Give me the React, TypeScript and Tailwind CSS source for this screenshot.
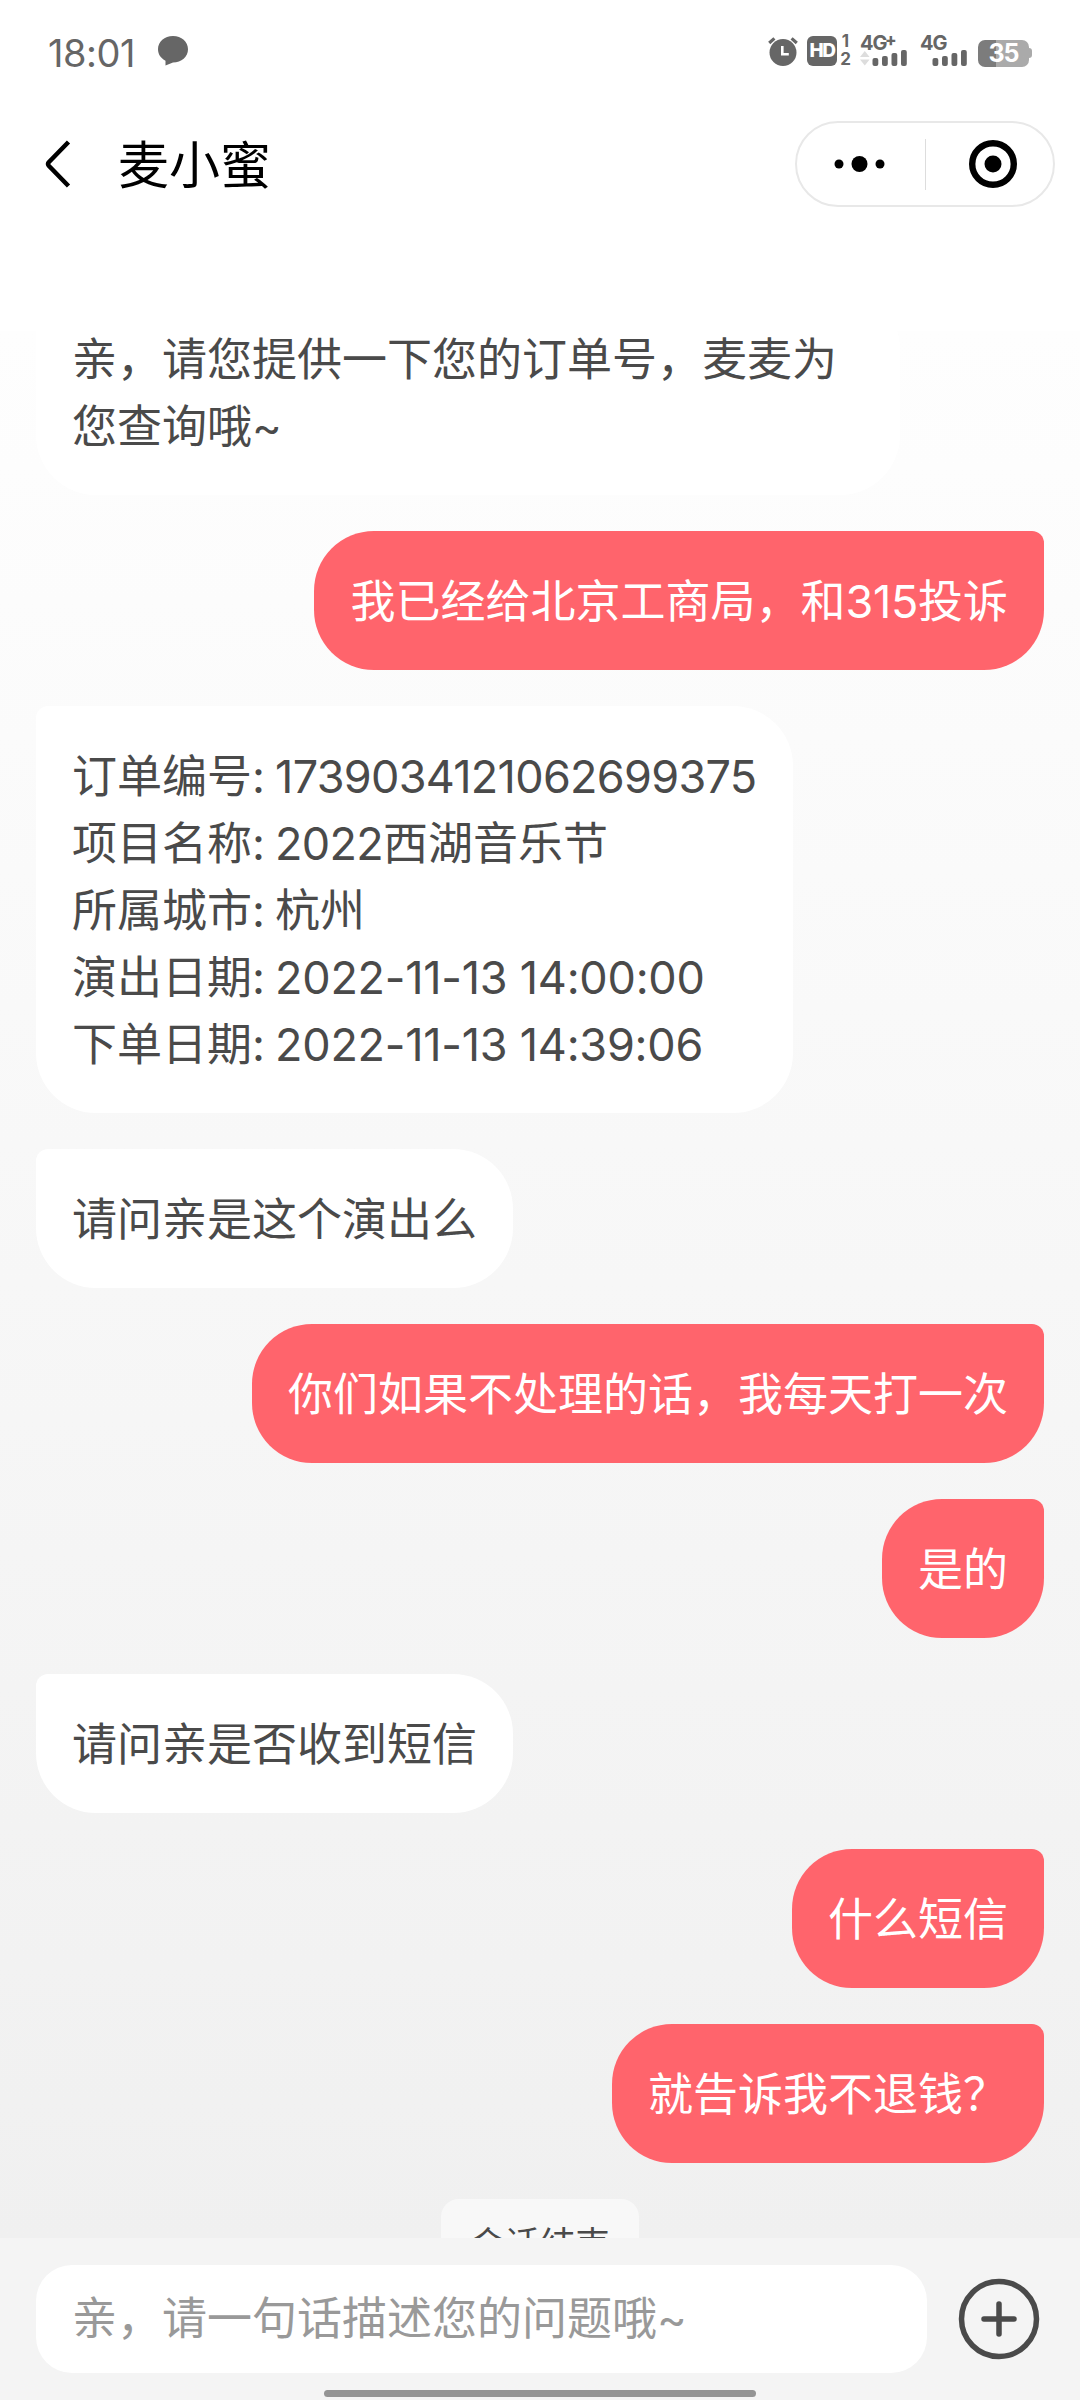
import clsx from "clsx";

type Message = {
    from: "bot" | "user";
    lines: string[];
    wrapped?: boolean;
};

const messages: Message[] = [
    { from: "bot", lines: ["亲，请您提供一下您的订单号，麦麦为", "您查询哦~"], wrapped: true },
    { from: "user", lines: ["我已经给北京工商局，和315投诉"] },
    {
        from: "bot",
        lines: [
            "订单编号: 1739034121062699375",
            "项目名称: 2022西湖音乐节",
            "所属城市: 杭州",
            "演出日期: 2022-11-13 14:00:00",
            "下单日期: 2022-11-13 14:39:06",
        ],
    },
    { from: "bot", lines: ["请问亲是这个演出么"] },
    { from: "user", lines: ["你们如果不处理的话，我每天打一次"] },
    { from: "user", lines: ["是的"] },
    { from: "bot", lines: ["请问亲是否收到短信"] },
    { from: "user", lines: ["什么短信"] },
    { from: "user", lines: ["就告诉我不退钱？"] },
];

function AlarmIcon() {
    return (
        <svg width="30" height="30" viewBox="0 0 30 30" fill="none">
            <circle cx="15" cy="16.5" r="13.5" fill="#666" />
            <path d="M1.2 7 6.4 2.4M28.8 7 23.6 2.4" stroke="#666" strokeWidth="3.2" />
            <path d="M14.3 10v8.3h6.5" stroke="#fff" strokeWidth="2.6" />
        </svg>
    );
}

function Signal({ label, plus }: { label: string; plus?: boolean }) {
    return (
        <div className="relative w-[47px] h-[30px]">
            <span className="absolute left-0 top-0 text-[20px] leading-[15px] font-bold tracking-[-1px]">{label}</span>
            {plus && <span className="absolute left-[25px] -top-[3px] text-[17px] leading-[15px] font-extrabold">+</span>}
            <svg className="absolute inset-0" width="47" height="30" viewBox="0 0 47 30" fill="#666">
                {plus && <path d="M0 21l4.8-6 4.8 6zM0 23.5h9.6l-4.8 6z" fill="#ddd" />}
                <rect x="12.5" y="22" width="5.8" height="8" rx="2" />
                <rect x="22" y="20" width="5.8" height="10" rx="2" />
                <rect x="31.5" y="17" width="5.8" height="13" rx="2" />
                <rect x="41" y="14" width="5.8" height="16" rx="2" />
            </svg>
        </div>
    );
}

function StatusBar() {
    return (
        <div className="h-[102px] pl-12 pr-[48px] pt-9 flex items-start justify-between text-[#666]">
            <div className="flex">
                <span className="w-[110px] text-[38px] leading-[34px] tracking-[-0.5px]">18:01</span>
                <svg width="30" height="30" viewBox="0 0 30 30" fill="#666">
                    <path d="M15 0c8.5 0 15 5.8 15 13.3S23.5 26.5 15 26.5L7.5 29.5V24.7C2.8 22.3 0 18.2 0 13.3 0 5.8 6.5 0 15 0z" />
                </svg>
            </div>
            <div className="flex">
                <AlarmIcon />
                <div className="ml-[9px] w-[30px] h-[30px] rounded-md bg-[#666] text-white text-[19px] leading-[30px] font-extrabold text-center tracking-[-1.5px]">HD</div>
                <div className="ml-[3px] w-[11px] text-[17px] leading-[15px] font-bold text-center">
                    <div className="-mt-[2px]">1</div>
                    <div className="mt-[3px]">2</div>
                </div>
                <div className="ml-[9px] flex gap-[13px]">
                    <Signal label="4G" plus />
                    <Signal label="4G" />
                </div>
                <div className="ml-[11px] mt-[3px] flex items-center">
                    <div className="w-[51px] h-[27px] rounded-[7px] bg-linear-to-r from-[#7c7c7c] from-35% to-[#aaa] to-35% text-white text-[25px] leading-[27px] font-bold text-center tracking-[-1px]">35</div>
                    <div className="w-[3px] h-[10px] rounded-r-sm bg-[#aaa]" />
                </div>
            </div>
        </div>
    );
}

function NavBar() {
    return (
        <div className="h-[229px] pl-[45px] pr-[25px] pt-[19px] flex items-start justify-between">
            <div className="flex items-center h-[86px]">
                <svg width="26" height="48" viewBox="0 0 26 48" fill="none" stroke="#000" strokeWidth="4.5">
                    <path d="M23.5 2 3.8 22.2q-1.5 1.8 0 3.6L23.5 46" />
                </svg>
                <h1 className="ml-[47px] mt-1 text-[51px] leading-[86px] text-black">麦小蜜</h1>
            </div>
            <div className="w-[260px] h-[86px] rounded-full border-2 border-[#e8e8e8] flex items-center">
                <svg className="w-32" height="24" viewBox="0 0 128 24">
                    <circle cx="42" cy="12" r="4.5" />
                    <circle cx="62.5" cy="12" r="8" />
                    <circle cx="83" cy="12" r="4.5" />
                </svg>
                <div className="w-px h-[51px] bg-[#ddd]" />
                <svg className="ml-[43px]" width="48" height="48" viewBox="0 0 48 48">
                    <circle cx="24" cy="24" r="20.8" fill="none" stroke="#000" strokeWidth="6.4" />
                    <circle cx="24" cy="24" r="8.5" />
                </svg>
            </div>
        </div>
    );
}

// digits and dates are set a little tighter than the Chinese text around them
function latinTracking(text: string) {
    if (text === ": ") return "tracking-[-1.3px]";
    if (text.includes("-")) return "tracking-[-0.25px]";
    if (text === "315") return "tracking-[-0.3px]";
    return "tracking-[-0.7px]";
}

function Bubble({ message }: { message: Message }) {
    return (
        <div
            className={clsx(
                "px-9 pt-[37px] pb-[35px] shrink-0 text-[45px] leading-[67px] whitespace-nowrap",
                message.wrapped && "w-[864px]",
                message.from === "user"
                    ? "self-end rounded-[60px] rounded-tr-xl bg-[#ff646c] text-white"
                    : "self-start rounded-[60px] rounded-tl-xl bg-white text-[#4a4a4a]"
            )}
        >
            {message.lines.map((line) => (
                <p key={line}>
                    {line.split(/(: |[\x20-\x7e]+)/).map((part, i) => (
                        <span key={i} className={i % 2 ? latinTracking(part) : undefined}>{part}</span>
                    ))}
                </p>
            ))}
        </div>
    );
}

function InputBar() {
    return (
        <footer className="h-[162px] bg-[#f4f4f4] pl-9 pr-10 pt-[27px] flex flex-col">
            <div className="flex items-center justify-between">
                <div className="w-[891px] h-[108px] rounded-[36px] bg-white px-9 text-[45px] leading-[108px] text-[#999]">亲，请一句话描述您的问题哦~</div>
                <svg width="82" height="82" viewBox="0 0 82 82" fill="none" stroke="#4a4a4a" strokeWidth="5.5">
                    <circle cx="41" cy="41" r="37.5" />
                    <path d="M41 26v30M26 41h30" strokeLinecap="round" />
                </svg>
            </div>
            <div className="mt-[17px] ml-[288px] w-[432px] h-[7px] rounded-full bg-[#949494]" />
        </footer>
    );
}

export default function App() {
    return (
        <div className="w-[1080px] h-[2400px] flex flex-col overflow-hidden bg-white font-[Inter,'Noto_Sans_CJK_SC',sans-serif]" lang="zh-CN">
            <header>
                <StatusBar />
                <NavBar />
            </header>
            <main className="h-[1907px] overflow-hidden bg-linear-to-b from-[#fefefe] to-[#f0f0f0]">
                <div className="-mt-[42px] px-9 flex flex-col gap-9">
                    {messages.map((message, i) => (
                        <Bubble key={i} message={message} />
                    ))}
                    <div className="self-center w-[198px] rounded-[18px] bg-[#f8f8f8] py-[18px] text-[35px] leading-[54px] text-center text-[#4a4a4a]">会话结束</div>
                </div>
            </main>
            <InputBar />
        </div>
    );
}
